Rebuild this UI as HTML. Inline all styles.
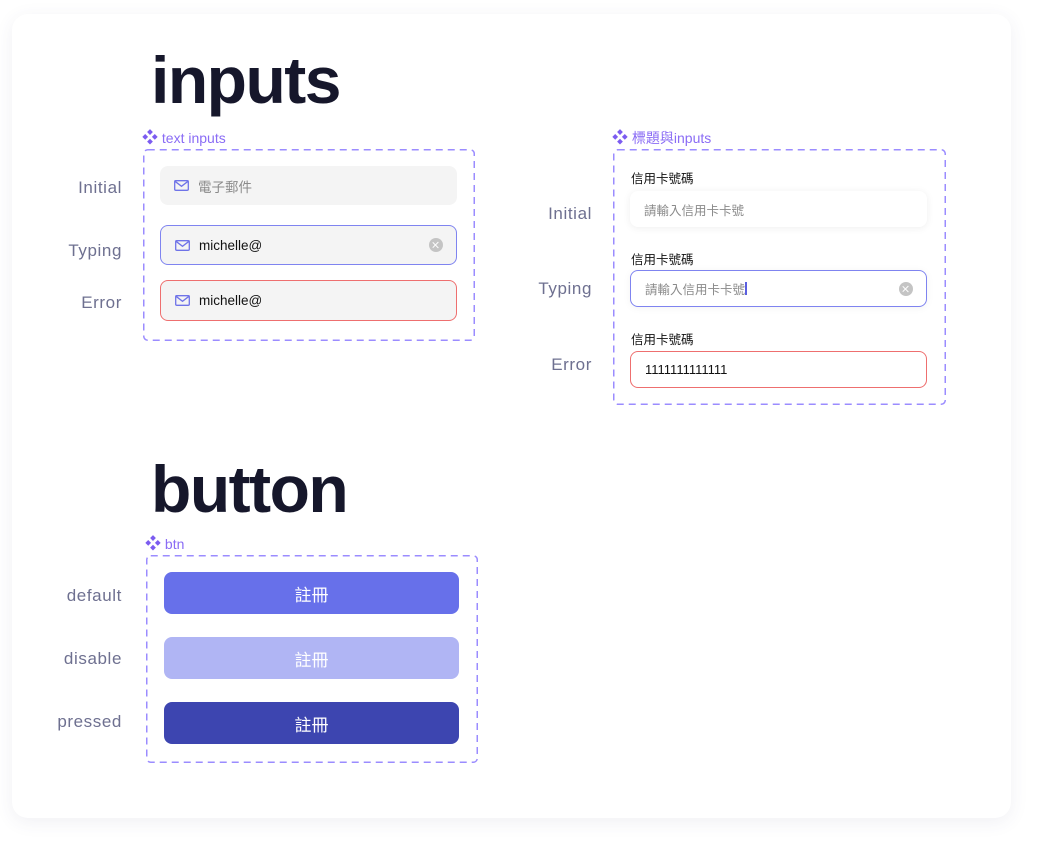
<!DOCTYPE html>
<html><head><meta charset="utf-8"><style>
*{margin:0;padding:0;box-sizing:border-box}
body{width:1042px;height:846px;background:#fff;position:relative;overflow:hidden;font-family:"Liberation Sans","Noto Sans CJK TC",sans-serif}
.card{position:absolute;left:12px;top:14px;width:999px;height:804px;background:#fff;border-radius:16px;box-shadow:0 4px 18px rgba(60,70,120,.08)}
h1{position:absolute;font-weight:700;color:#16172b;font-size:66px;line-height:1;letter-spacing:-1.5px}
.dash{position:absolute;overflow:visible}
.tag{position:absolute;color:#8a6cf5;font-size:14px;line-height:1}
.tag b{font-size:16px;font-weight:700;color:#7c5cf0}
.lab{position:absolute;color:#6e7090;font-size:17px;letter-spacing:.6px;text-align:right;width:120px;line-height:1}
.inp{position:absolute;border-radius:8px;background:#f4f4f4;font-size:13.5px;display:flex;align-items:center;padding-left:14px}
.inp svg{margin-right:9px}
.clr{position:absolute;right:13px;top:50%;margin-top:-7px;width:14px;height:14px;border-radius:50%;background:#c4c4c4}
.clr:before,.clr:after{content:"";position:absolute;left:6.3px;top:3px;width:1.4px;height:8px;background:#fff;transform:rotate(45deg)}
.clr:after{transform:rotate(-45deg)}
.fl{position:absolute;font-size:12.5px;color:#111}
.btn{position:absolute;left:164px;width:295px;height:42px;border-radius:8px;color:#fff;font-size:17px;display:flex;align-items:center;justify-content:center}
</style></head><body>
<div class="card"></div>
<h1 style="left:151px;top:47px">inputs</h1>
<h1 style="left:151px;top:456px">button</h1>

<div class="tag" style="left:142px;top:131px"><b>❖</b> text inputs</div>
<svg class="dash" style="left:143px;top:149px" width="332" height="192"><rect x=".75" y=".75" width="330.5" height="190.5" rx="4" fill="none" stroke="#9b8cff" stroke-width="1.5" stroke-dasharray="7 5"/></svg>
<div class="lab" style="left:2px;top:179px">Initial</div>
<div class="lab" style="left:2px;top:242px">Typing</div>
<div class="lab" style="left:2px;top:294px">Error</div>
<div class="inp" style="left:160px;top:166px;width:297px;height:39px;color:#8a8a8a"><svg width="15" height="11" viewBox="0 0 15 11"><rect x=".7" y=".7" width="13.6" height="9.6" rx="1" fill="none" stroke="#6f73e8" stroke-width="1.3"/><path d="M1 1.3l6.5 5 6.5-5" fill="none" stroke="#6f73e8" stroke-width="1.3"/></svg>電子郵件</div>
<div class="inp" style="left:160px;top:225px;width:297px;height:40px;border:1.3px solid #7f84f0;color:#111"><svg width="15" height="11" viewBox="0 0 15 11"><rect x=".7" y=".7" width="13.6" height="9.6" rx="1" fill="none" stroke="#6f73e8" stroke-width="1.3"/><path d="M1 1.3l6.5 5 6.5-5" fill="none" stroke="#6f73e8" stroke-width="1.3"/></svg>michelle@<span class="clr"></span></div>
<div class="inp" style="left:160px;top:280px;width:297px;height:41px;border:1.3px solid #ee6f6f;color:#111"><svg width="15" height="11" viewBox="0 0 15 11"><rect x=".7" y=".7" width="13.6" height="9.6" rx="1" fill="none" stroke="#6f73e8" stroke-width="1.3"/><path d="M1 1.3l6.5 5 6.5-5" fill="none" stroke="#6f73e8" stroke-width="1.3"/></svg>michelle@</div>

<div class="tag" style="left:612px;top:131px"><b>❖</b> 標題與inputs</div>
<svg class="dash" style="left:613px;top:149px" width="333" height="256"><rect x=".75" y=".75" width="331.5" height="254.5" rx="4" fill="none" stroke="#9b8cff" stroke-width="1.5" stroke-dasharray="7 5"/></svg>
<div class="lab" style="left:472px;top:205px">Initial</div>
<div class="lab" style="left:472px;top:280px">Typing</div>
<div class="lab" style="left:472px;top:356px">Error</div>
<div class="fl" style="left:631px;top:168px">信用卡號碼</div>
<div class="fl" style="left:631px;top:249px">信用卡號碼</div>
<div class="fl" style="left:631px;top:329px">信用卡號碼</div>
<div class="inp" style="left:630px;top:191px;width:297px;height:36px;background:#fff;box-shadow:0 1px 8px rgba(0,0,0,.07);color:#8a8a8a;font-size:12.5px">請輸入信用卡卡號</div>
<div class="inp" style="left:630px;top:270px;width:297px;height:37px;background:#fff;border:1.3px solid #7f84f0;box-shadow:0 1px 8px rgba(0,0,0,.05);color:#8a8a8a;font-size:12.5px">請輸入信用卡卡號<span style="display:inline-block;width:1.5px;height:13px;background:#5a5fe0"></span><span class="clr"></span></div>
<div class="inp" style="left:630px;top:351px;width:297px;height:37px;background:#fff;border:1.3px solid #ee6f6f;color:#111;font-size:13px">1111111111111</div>

<div class="tag" style="left:145px;top:537px"><b>❖</b> btn</div>
<svg class="dash" style="left:146px;top:555px" width="332" height="208"><rect x=".75" y=".75" width="330.5" height="206.5" rx="4" fill="none" stroke="#9b8cff" stroke-width="1.5" stroke-dasharray="7 5"/></svg>
<div class="lab" style="left:2px;top:587px">default</div>
<div class="lab" style="left:2px;top:650px">disable</div>
<div class="lab" style="left:2px;top:713px">pressed</div>
<div class="btn" style="top:572px;background:#6770ea">註冊</div>
<div class="btn" style="top:637px;background:#b0b5f4">註冊</div>
<div class="btn" style="top:702px;background:#3d45b0">註冊</div>
</body></html>
